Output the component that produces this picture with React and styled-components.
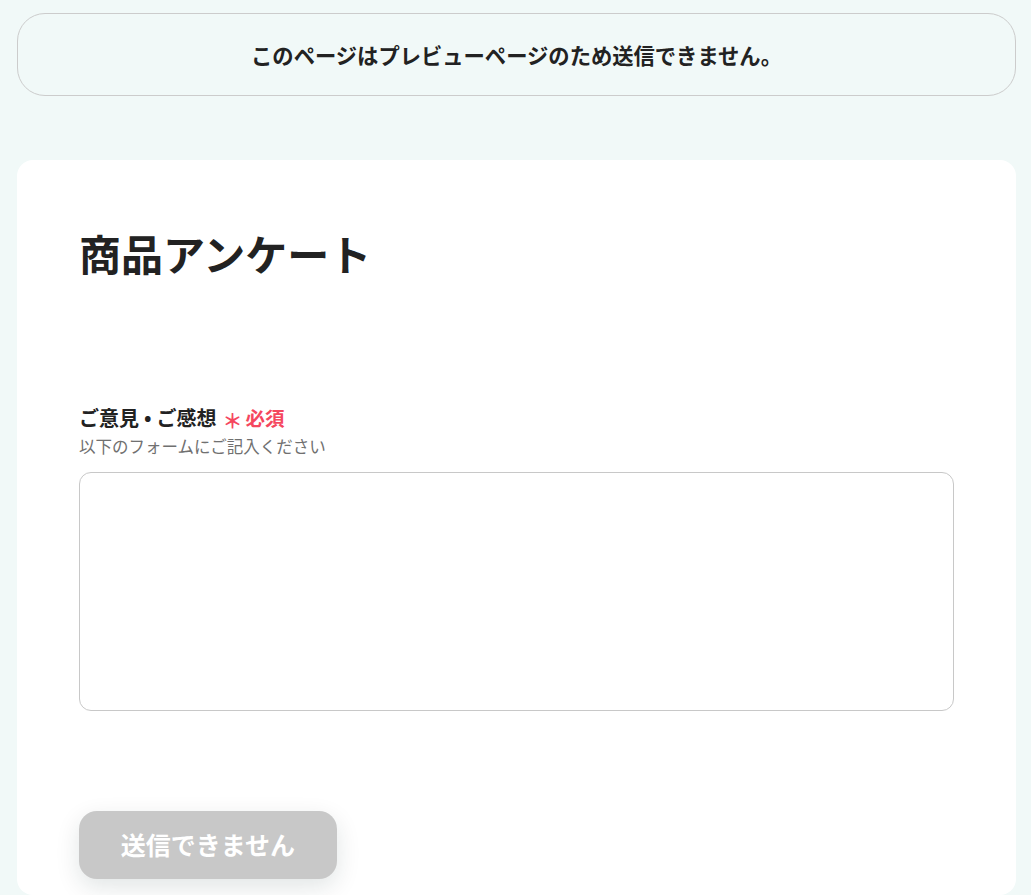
import React from "react";
import styled, { createGlobalStyle } from "styled-components";

const GlobalStyle = createGlobalStyle`
	html, body {
		margin: 0;
		padding: 0;
		background: #f1f9f8;
	}
	body {
		font-family: "Noto Sans CJK JP", "Noto Sans", sans-serif;
		color: #222222;
	}
`;

const Page = styled.div`
	padding: 13px 15px 0 17px;
	min-height: 895px;
	box-sizing: border-box;
`;

const Notice = styled.div`
	height: 83px;
	box-sizing: border-box;
	border: 1px solid #cccccc;
	border-radius: 28px;
	display: flex;
	align-items: center;
	justify-content: center;
	font-size: 21.3px;
	font-weight: 700;
	color: #222222;
`;

const Card = styled.form`
	margin-top: 64px;
	background: #ffffff;
	border-radius: 16px;
	padding: 60px 62px 16px;
	min-height: 735px;
	box-sizing: border-box;
`;

const Title = styled.h1`
	margin: 0;
	font-size: 42px;
	line-height: 66px;
	font-weight: 700;
	color: #222222;
`;

const Field = styled.div`
	margin-top: 118px;
	display: flex;
	flex-direction: column;
`;

const Label = styled.label`
	display: flex;
	align-items: baseline;
	gap: 6px;
	font-size: 20px;
	font-weight: 700;
	line-height: 28px;
`;

const Dot = styled.span`
	font-family: "Noto Sans", sans-serif;
	margin: 0 5px;
`;

const Required = styled.span`
	color: #f5475e;
	font-size: 19.5px;
	font-weight: 700;
	display: inline-flex;
	align-items: baseline;
	gap: 3px;
`;

const Star = styled.span`
	font-size: 20px;
	position: relative;
	top: 3px;
`;

const Hint = styled.p`
	margin: 2px 0 15px;
	font-size: 16.5px;
	line-height: 22px;
	color: #707070;
`;

const TextArea = styled.textarea`
	width: 100%;
	height: 239px;
	box-sizing: border-box;
	border: 1px solid #c8c8c8;
	border-radius: 12px;
	resize: none;
	padding: 12px 16px;
	font: inherit;
	font-size: 16px;
	outline: none;
`;

const SubmitButton = styled.button`
	margin-top: 100px;
	width: 258px;
	height: 68px;
	border: none;
	border-radius: 18px;
	background: #c8c8c8;
	color: #ffffff;
	font-family: inherit;
	font-size: 25px;
	font-weight: 700;
	padding: 0 0 2px;
	box-shadow: 0 8px 24px rgba(0, 40, 40, 0.12);
	cursor: not-allowed;
`;

export default function App() {
	return (
		<>
			<GlobalStyle />
			<Page>
				<Notice>このページはプレビューページのため送信できません。</Notice>
				<Card onSubmit={(e) => e.preventDefault()}>
					<Title>商品アンケート</Title>
					<Field>
						<Label>
							<span>
								ご意見<Dot>•</Dot>ご感想
							</span>
							<Required>
								<Star>＊</Star>必須
							</Required>
						</Label>
						<Hint>以下のフォームにご記入ください</Hint>
						<TextArea />
					</Field>
					<SubmitButton type="button">送信できません</SubmitButton>
				</Card>
			</Page>
		</>
	);
}
